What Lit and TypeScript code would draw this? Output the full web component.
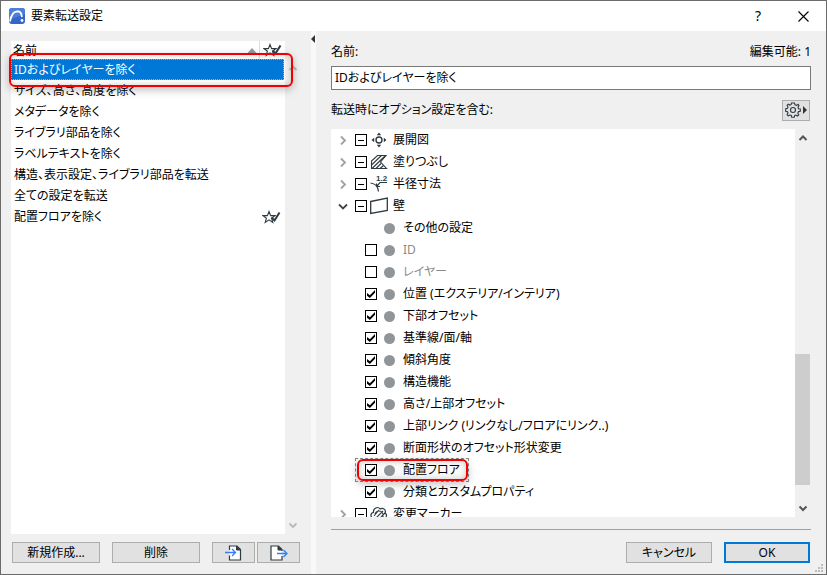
import { LitElement, html, css, svg, nothing } from "lit";
import { customElement, state } from "lit/decorators.js";

const star = html`<svg class="star" viewBox="0 0 19 14" width="19" height="14" aria-hidden="true">
  <path d="M7 1.5 8.6 5.6H13L9.6 8.2 10.8 12.4 7 9.9 3.2 12.4 4.4 8.2 1 5.6H5.4Z" fill="none" stroke="#2f3b40" stroke-width="1.1" />
  <path d="M9.5 7.500 12.5 10.5 17.5 2.5" fill="none" stroke="#2f3b40" stroke-width="2" />
</svg>`;

const chevron = (d: string, w = 1.8) =>
  html`<svg viewBox="0 0 10 10" width="10" height="10" aria-hidden="true">
    <path d=${d} fill="none" stroke="currentColor" stroke-width=${w} />
  </svg>`;
const UP = "M1.5 7 5 3.5 8.500 7";
const DOWN = "M1.5 3.5 5 7 8.500 3.5";
const RIGHT = "M3 1.500 7 5.500 3 9.500";
const OPEN = "M1 3.5 5 7.500 9 3.5";

const icons: Record<string, unknown> = {
  elevation: svg`<circle cx="9" cy="9" r="3" fill="none" stroke="#2f3b40" stroke-width="1.4"/>
    <path d="M9 1.500 11.200 4.200H6.800zM9 16.500l2.200-2.700H6.800zM1.500 9l2.700-2.200v4.400zM16.500 9l-2.700-2.200v4.400z" fill="#2f3b40"/>`,
  fill: svg`<path d="M1.500 15.500V8L7.500 2.500H16L10.500 9 16.500 15.500Z" fill="none" stroke="#2f3b40" stroke-width="1.1"/>
    <path d="M1.500 12 11.500 2.500M2 15.500 15 3M6 15.500 11 10.500M10 15.500 13.500 12.500" stroke="#2f3b40" stroke-width="1.1"/>`,
  radius: svg`<path d="M0.500 8C5 8.500 8 11.500 8.500 16.500M7 11 10 7.500H17M6.500 8.500V11.500H10" fill="none" stroke="#2f3b40" stroke-width="1.2"/>
    <text x="6" y="6" font-size="8" font-weight="700" fill="#2f3b40">1.2</text>`,
  wall: svg`<path d="M0.700 4.500 17.300 1V13.500L0.700 16.500Z" fill="none" stroke="#2f3b40" stroke-width="1.3"/>`,
  marker: svg`<path d="M4 13C0 13 0 8 3.500 7.500 3 3 8 1 10 4 13 2 16.500 5 15 8 18 10 16 14 13 13 11 17 6 16 6 13Z" fill="none" stroke="#2f3b40" stroke-width="1.2"/>
    <path d="M5 10a4 4 0 0 1 8 0v3M6 13 13 6M9 14 15 8M4 11 9 5" fill="none" stroke="#2f3b40" stroke-width="1.1"/>`,
};

interface Group { kind: "group"; label: string; icon: string; open?: boolean }
interface Leaf { kind: "leaf"; label: string; checked?: boolean; plain?: boolean; muted?: boolean; focused?: boolean }

const on = (label: string, focused = false): Leaf => ({ kind: "leaf", label, checked: true, focused });

@customElement("app-root")
export class AppRoot extends LitElement {
  @state() private selected = 0;

  private presets = [
    { name: "IDおよびレイヤーを除く" },
    { name: "サイズ、高さ、高度を除く" },
    { name: "メタデータを除く" },
    { name: "ライブラリ部品を除く" },
    { name: "ラベルテキストを除く" },
    { name: "構造、表示設定、ライブラリ部品を転送" },
    { name: "全ての設定を転送" },
    { name: "配置フロアを除く", favourite: true },
  ];

  private rows: (Group | Leaf)[] = [
    { kind: "group", label: "展開図", icon: "elevation" },
    { kind: "group", label: "塗りつぶし", icon: "fill" },
    { kind: "group", label: "半径寸法", icon: "radius" },
    { kind: "group", label: "壁", icon: "wall", open: true },
    { kind: "leaf", label: "その他の設定", plain: true },
    { kind: "leaf", label: "ID", muted: true },
    { kind: "leaf", label: "レイヤー", muted: true },
    on("位置 (エクステリア/インテリア)"),
    on("下部オフセット"),
    on("基準線/面/軸"),
    on("傾斜角度"),
    on("構造機能"),
    on("高さ/上部オフセット"),
    on("上部リンク (リンクなし/フロアにリンク..)"),
    on("断面形状のオフセット形状変更"),
    on("配置フロア", true),
    on("分類とカスタムプロパティ"),
    { kind: "group", label: "変更マーカー", icon: "marker" },
  ];

  static styles = css`
    :host {
      display: block;
      color: #000;
      font: 12px/20px "Noto Sans", "Noto Sans CJK JP", sans-serif;
      font-feature-settings: "palt";
    }
    * { box-sizing: border-box; }
    button, input { font: inherit; font-feature-settings: inherit; color: inherit; margin: 0; }
    svg { display: block; flex: none; }
    .window {
      display: flex;
      flex-direction: column;
      height: 100vh;
      border: 1px solid #6b6b6b;
      background: #f0f0f0;
      overflow: hidden;
    }
    .titlebar {
      display: flex;
      align-items: center;
      flex: none;
      height: 30px;
      padding: 0 7px 0 8px;
      gap: 6px;
      background: #fff;
    }
    .titlebar h1 { flex: 1; margin: 0; font-size: 12px; font-weight: 400; font-feature-settings: normal; }
    .caption {
      display: grid;
      place-items: center;
      width: 32px;
      height: 28px;
      padding: 0;
      border: 0;
      background: none;
      font-size: 14px;
    }
    .caption + .caption { margin-left: 7px; }
    .body { display: flex; flex: 1; min-height: 0; }
    .left {
      display: flex;
      flex-direction: column;
      flex: 0 0 310px;
      padding: 10px 10px 11px;
      gap: 8px;
    }
    .splitter {
      position: relative;
      flex: none;
      width: 5px;
      background: #f9f9f9;
    }
    .collapse {
      position: absolute;
      top: 4px;
      left: 0;
      width: 4px;
      height: 8px;
      padding: 0;
      border: 0;
      background: #333;
      clip-path: polygon(100% 0, 0 50%, 100% 100%);
    }
    .right {
      display: flex;
      flex-direction: column;
      flex: 1;
      min-width: 0;
      padding: 11px 15px;
    }
    .listarea { position: relative; display: flex; flex: 1; min-height: 0; }
    .list { flex: 1; padding-right: 1px; background: #fff; }
    table { width: 100%; border-collapse: collapse; table-layout: fixed; }
    th, td { height: 21px; padding: 0 0 0 3px; text-align: left; font-weight: 400; white-space: nowrap; line-height: 20px; }
    th { height: 18px; padding-left: 2px; line-height: 18px; }
    .mark { width: 25px; padding: 0 0 0 3px; }
    th.mark { border-left: 1px solid #dcdcdc; }
    .sorted { display: flex; align-items: center; justify-content: space-between; height: 18px; padding: 1px 2px 0 0; }
    .sorted i { width: 9px; height: 5px; background: #999; clip-path: polygon(50% 0, 100% 100%, 0 100%); }
    .chosen { background: #0078d7; color: #fff; outline: 1px dotted #ff9a4a; outline-offset: -1px; }
    .scroll {
      display: flex;
      flex-direction: column;
      align-items: center;
      justify-content: space-between;
      flex: none;
      width: 16px;
      padding: 4px 1px 4px 0;
      color: #b8b8b8;
    }
    .listarea .scroll { padding-top: 22px; }
    .callout {
      position: absolute;
      border: 2px solid #f00000;
      border-radius: 6px;
      box-shadow: 0 3px 8px rgba(0, 0, 0, 0.25), inset 0 0 6px rgba(0, 0, 0, 0.2);
      pointer-events: none;
    }
    .callout.preset { top: 12px; left: -2px; right: 8px; height: 34px; }
    .callout.option { inset: 1px 1px 1px 2px; }
    .actions { display: flex; padding-left: 1px; }
    .btn {
      display: grid;
      place-items: center;
      height: 21px;
      padding: 0;
      border: 1px solid #adadad;
      background: #e1e1e1;
      line-height: 18px;
    }
    .create, .delete { width: 88px; margin-right: 12px; }
    .import, .export { width: 43px; }
    .export { margin-left: 2px; }
    .fieldhead, .treehead { display: flex; justify-content: space-between; }
    .fieldhead { height: 24px; }
    .name {
      width: 100%;
      height: 24px;
      padding: 0 3px 2px;
      border: 1px solid #7a7a7a;
      border-radius: 0;
      background: #fff;
      outline: 0;
      flex: none;
    }
    .treehead { align-items: center; flex: none; height: 22px; margin: 9px 0 8px; }
    .gear { display: flex; align-items: center; justify-content: center; width: 28px; gap: 2px; margin-right: 1px; }
    .gear i { width: 4px; height: 8px; background: #333; clip-path: polygon(0 0, 100% 50%, 0 100%); }
    .treearea { display: flex; flex: 1; min-height: 0; }
    .tree { flex: 1; margin: 0; padding: 0; overflow: hidden; background: #fff; list-style: none; }
    .tree li { display: flex; align-items: center; height: 22px; padding-left: 6px; }
    .tree li.leaf { padding-left: 24px; }
    .toggle { display: grid; place-items: center; width: 12px; height: 18px; padding: 0; margin-right: 6px; border: 0; background: none; color: #a0a0a0; }
    .toggle.open { color: #444; }
    .tree label { position: relative; display: flex; align-items: center; white-space: nowrap; }
    .group label svg { margin: 0 5px 0 3px; }
    .group text { font-family: "Liberation Sans", sans-serif; }
    .leaf label { height: 24px; padding: 0 9px 0 10px; }
    .leaf .focused { outline: 1px dashed #888; outline-offset: -1px; background: #fafafa; }
    .muted { color: #8a8a8a; }
    .dot { width: 11px; height: 11px; margin: 0 8px 0 7px; border-radius: 50%; background: #8f9599; }
    .plain .dot { margin-left: 19px; }
    input[type="checkbox"] {
      appearance: none;
      display: grid;
      place-items: center;
      flex: none;
      width: 12px;
      height: 12px;
      border: 1px solid #000;
      background: #fff;
    }
    input[type="checkbox"]:checked::before {
      content: "";
      width: 8px;
      height: 8px;
      background: #000;
      clip-path: polygon(0 38%, 36% 66%, 100% 0, 100% 34%, 36% 100%, 0 72%);
    }
    input[type="checkbox"]:indeterminate::before { content: ""; width: 6px; height: 1px; background: #000; }
    .treearea .scroll { color: #555; }
    .thumb { width: 15px; height: 131px; margin: 211px 0 auto; background: #cdcdcd; }
    .rule { flex: none; width: 100%; height: 1px; margin: 12px 0; border: 0; background: #a0a0a0; }
    .dialog { display: flex; flex: none; justify-content: flex-end; gap: 12px; padding-right: 1px; }
    .dialog .btn { width: 86px; }
    .dialog .ok { border: 2px solid #0078d7; }
    .grip { position: fixed; right: 3px; bottom: 2px; }
  `;

  private renderRow(r: Group | Leaf) {
    if (r.kind === "group") {
      return html`<li class="group">
        <button class="toggle ${r.open ? "open" : ""}" aria-label=${r.label} aria-expanded=${r.open ? "true" : "false"}>
          ${chevron(r.open ? OPEN : RIGHT)}
        </button>
        <label>
          <input type="checkbox" .indeterminate=${true} />
          <svg viewBox="0 0 18 18" width="18" height="18" aria-hidden="true">${icons[r.icon]}</svg>
          <span>${r.label}</span>
        </label>
      </li>`;
    }
    return html`<li class="leaf">
      <label class="${r.muted ? "muted" : ""} ${r.plain ? "plain" : ""} ${r.focused ? "focused" : ""}">
        ${r.plain ? nothing : html`<input type="checkbox" .checked=${!!r.checked} />`}
        <span class="dot"></span>
        <span>${r.label}</span>
        ${r.focused ? html`<span class="callout option"></span>` : nothing}
      </label>
    </li>`;
  }

  render() {
    return html`<main class="window">
      <header class="titlebar">
        <svg viewBox="0 0 16 16" width="16" height="16" aria-hidden="true">
          <rect width="16" height="16" rx="3" fill="#3565c8" />
          <path d="M0 3a3 3 0 0 1 3-3h10a3 3 0 0 1 3 3v3L0 12Z" fill="#4d7edc" />
          <path d="M1 13.500C2 8 4.500 3.500 8 3.500H9.500C11.500 3.500 12.500 6 13 9" fill="none" stroke="#fff" stroke-width="1.8" />
          <circle cx="13" cy="12.500" r="1.400" fill="#fff" />
        </svg>
        <h1>要素転送設定</h1>
        <button class="caption">?</button>
        <button class="caption" aria-label="閉じる">
          <svg viewBox="0 0 11 11" width="11" height="11"><path d="M.5.5l10 10M10.500.5l-10 10" stroke="#000" stroke-width="1.1" /></svg>
        </button>
      </header>
      <div class="body">
        <section class="left">
          <div class="listarea">
            <div class="list">
              <table>
                <thead>
                  <tr>
                    <th><div class="sorted">名前<i></i></div></th>
                    <th class="mark">${star}</th>
                  </tr>
                </thead>
                <tbody>
                  ${this.presets.map(
                    (p, i) => html`<tr class=${i === this.selected ? "chosen" : ""} @click=${() => (this.selected = i)}>
                      <td>${p.name}</td>
                      <td class="mark">${p.favourite ? star : nothing}</td>
                    </tr>`
                  )}
                </tbody>
              </table>
            </div>
            <div class="scroll">${chevron(UP)}${chevron(DOWN)}</div>
            <div class="callout preset"></div>
          </div>
          <div class="actions">
            <button class="btn create">新規作成...</button>
            <button class="btn delete">削除</button>
            <button class="btn import" aria-label="読み込み">
              <svg viewBox="0 0 18 16" width="18" height="16">
                <path d="M4.500 5V1H12L15.500 4.500V15H4.500V10.500" fill="#fff" stroke="#2f3b40" stroke-width="1.200" />
                <path d="M11.500 1V5H15.500Z" fill="#2f3b40" stroke="#2f3b40" />
                <path d="M0 7.500H10M7 4 10.500 7.500 7 11" fill="none" stroke="#2f80ff" stroke-width="1.300" />
              </svg>
            </button>
            <button class="btn export" aria-label="書き出し">
              <svg viewBox="0 0 18 16" width="18" height="16">
                <path d="M12 11V15H1V1H8.500L12 4.500V6" fill="#fff" stroke="#2f3b40" stroke-width="1.200" />
                <path d="M8 1V5H12Z" fill="#2f3b40" stroke="#2f3b40" />
                <path d="M7 8.500H17M13.500 5 17 8.500 13.500 12" fill="none" stroke="#2f80ff" stroke-width="1.300" />
              </svg>
            </button>
          </div>
        </section>
        <div class="splitter"><button class="collapse" aria-label="折りたたむ"></button></div>
        <section class="right">
          <div class="fieldhead"><label for="name">名前:</label><span>編集可能: 1</span></div>
          <input class="name" id="name" type="text" .value=${this.presets[this.selected].name} />
          <div class="treehead">
            <span>転送時にオプション設定を含む:</span>
            <button class="btn gear" aria-label="設定">
              <svg viewBox="-8 -8 16 16" width="16" height="16">
                <path
                  d="M-1.500-7H1.500L2-5.200 3.500-4.600 5-5.700 6-4.400 5-2.700 5.500-1.300 7.300-1V1.200L5.500 1.600 4.800 3.200 5.800 4.800 4.500 6 2.900 5 1.700 5.500 1.300 7.300H-1.300L-1.700 5.500-3.100 5-4.700 5.900-5.900 4.600-5 3-5.500 1.700-7.300 1.300V-1.200L-5.500-1.600-5-3-5.900-4.600-4.700-5.800-3.100-4.900-1.900-5.300Z"
                  fill="none" stroke="#2f3b40" stroke-width="1.100" />
                <circle r="2.500" fill="none" stroke="#2f3b40" stroke-width="1.100" />
              </svg>
              <i></i>
            </button>
          </div>
          <div class="treearea">
            <ul class="tree">${this.rows.map((r) => this.renderRow(r))}</ul>
            <div class="scroll">${chevron(UP, 2)}<div class="thumb"></div>${chevron(DOWN, 2)}</div>
          </div>
          <hr class="rule" />
          <div class="dialog">
            <button class="btn cancel">キャンセル</button>
            <button class="btn ok">OK</button>
          </div>
        </section>
      </div>
      <svg class="grip" viewBox="0 0 9 9" width="9" height="9" aria-hidden="true">
        <path d="M6 0h2v2H6zM3 3h2v2H3zM6 3h2v2H6zM0 6h2v2H0zM3 6h2v2H3zM6 6h2v2H6z" fill="#bdbdbd" />
      </svg>
    </main>`;
  }
}
